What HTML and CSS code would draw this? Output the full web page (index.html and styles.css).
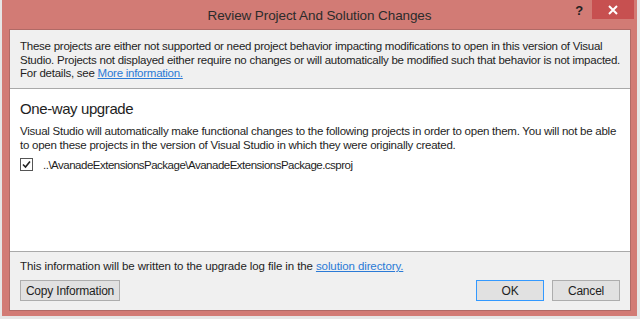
FILE: index.html
```html
<!DOCTYPE html>
<html lang="en">
<head>
    <meta charset="UTF-8">
    <title>Review Project And Solution Changes</title>
    <link rel="stylesheet" href="styles.css">
</head>
<body>
    <div class="window">
        <div class="titlebar">
            <div></div>
            <div class="title">Review Project And Solution Changes</div>
            <div class="controls">
                <span class="help">?</span>
                <span class="close">
                    <svg width="10" height="10" viewBox="0 0 10 10"><path d="M1 1 L9 9 M9 1 L1 9" stroke="#fff" stroke-width="2"/></svg>
                </span>
            </div>
        </div>
        <div class="client">
            <div class="notice">
                These projects are either not supported or need project behavior impacting modifications to open in this version of Visual<br>
                Studio. Projects not displayed either require no changes or will automatically be modified such that behavior is not impacted.<br>
                For details, see <a href="#">More information.</a>
            </div>
            <div class="content">
                <h2>One-way upgrade</h2>
                <p>Visual Studio will automatically make functional changes to the following projects in order to open them. You will not be able<br>
                to open these projects in the version of Visual Studio in which they were originally created.</p>
                <label class="project">
                    <span class="check">
                        <svg width="9" height="9" viewBox="0 0 9 9"><path d="M1 4.5 L3.5 7 L8 1.5" stroke="#222" stroke-width="1.6" fill="none"/></svg>
                    </span>
                    <span class="path">..\AvanadeExtensionsPackage\AvanadeExtensionsPackage.csproj</span>
                </label>
            </div>
            <div class="footer">
                <p>This information will be written to the upgrade log file in the <a href="#">solution directory.</a></p>
                <div class="buttons">
                    <button class="btn copy">Copy Information</button>
                    <div class="right">
                        <button class="btn ok">OK</button>
                        <button class="btn">Cancel</button>
                    </div>
                </div>
            </div>
        </div>
    </div>
</body>
</html>
```

FILE: styles.css
```css
body {
    margin: 0;
    background: #e6e6e6;
    font-family: 'Liberation Sans', Arial, sans-serif;
    font-size: 11.5px;
    letter-spacing: -0.25px;
    color: #1e1e1e;
}
.window {
    margin-left: 2px;
    width: 635px;
    height: 316px;
    box-sizing: border-box;
    background: #d27b75;
    padding: 0 6px 5px 7px;
    display: flex;
    flex-direction: column;
}
.titlebar {
    height: 29px;
    margin: 0 -6px 0 -7px;
    display: grid;
    grid-template-columns: 1fr auto 1fr;
    align-items: start;
}
.title {
    font-size: 13.5px;
    letter-spacing: -0.1px;
    color: #2b2b2b;
    padding-top: 8px;
}
.controls {
    display: flex;
    justify-content: flex-end;
    align-items: center;
    padding-right: 3px;
}
.help {
    font-weight: bold;
    font-size: 13px;
    color: #222;
    margin-right: 9px;
    margin-top: 1px;
}
.close {
    width: 42px;
    height: 19px;
    background: #c75050;
    display: flex;
    align-items: center;
    justify-content: center;
}
.client {
    flex: 1;
    border: 1px solid #b06a66;
    background: #fff;
    display: flex;
    flex-direction: column;
}
.notice {
    background: #f0f0f0;
    border-bottom: 1px solid #a9a9a9;
    padding: 10px 10px 8px 10px;
    line-height: 13.5px;
    height: 40px;
    white-space: nowrap;
}
a {
    color: #2a7ad6;
}
.content {
    flex: 1;
    padding: 0 10px;
}
.content h2 {
    font-weight: normal;
    font-size: 15px;
    letter-spacing: -0.4px;
    margin: 11px 0 7px 0;
}
.content p {
    margin: 0 0 6px 0;
    line-height: 14px;
    white-space: nowrap;
}
.project {
    display: flex;
    align-items: center;
    gap: 10px;
}
.path {
    letter-spacing: -0.5px;
}
.check {
    width: 11px;
    height: 11px;
    border: 1px solid #555;
    display: flex;
    align-items: center;
    justify-content: center;
}
.footer {
    background: #f0f0f0;
    border-top: 1px solid #a9a9a9;
    padding: 8px 10px 9px 10px;
}
.footer p {
    margin: 0 0 8px 0;
    letter-spacing: -0.1px;
}
.buttons {
    display: flex;
    justify-content: space-between;
}
.right {
    display: flex;
    gap: 8px;
}
.btn {
    font-family: inherit;
    font-size: 12px;
    letter-spacing: -0.2px;
    color: #1e1e1e;
    background: #e1e1e1;
    border: 1px solid #adadad;
    height: 21px;
    width: 68px;
    padding: 0;
}
.btn.copy {
    width: 100px;
}
.btn.ok {
    border-color: #3399ff;
}
```
